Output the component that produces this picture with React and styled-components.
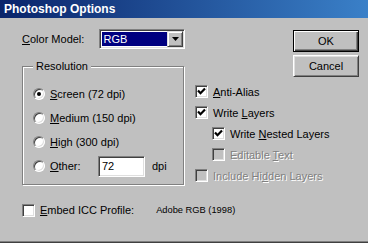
import React from 'react';
import styled, { createGlobalStyle } from 'styled-components';

const face = '#c0c0c0';

const GlobalStyle = createGlobalStyle`
  html, body {
    margin: 0;
    padding: 0;
    background: ${face};
  }
  * { box-sizing: border-box; }
`;

const Dialog = styled.div`
  width: 368px;
  height: 243px;
  background: ${face};
  font-family: "Liberation Sans", Arial, sans-serif;
  font-size: 11px;
  color: #000;
  display: flex;
  flex-direction: column;
  box-shadow: inset 0 -1px 0 #404040, inset 0 -2px 0 #808080;
`;

const TitleBar = styled.div`
  height: 18px;
  line-height: 18px;
  padding-left: 4px;
  color: #fff;
  font-weight: bold;
  font-size: 12px;
  background: linear-gradient(to right, #0a246a, #3a80c8);
`;

const Content = styled.div`
  display: flex;
  padding: 11px 0 0 22px;
`;

const LeftCol = styled.div`
  width: 163px;
  display: flex;
  flex-direction: column;
`;

const RightCol = styled.div`
  flex: 1;
  margin-left: 10px;
  display: flex;
  flex-direction: column;
`;

const FieldRow = styled.div`
  height: 20px;
  display: flex;
  align-items: center;
`;

const Label = styled.span`
  width: ${p => p.$w || 'auto'};
  color: ${p => (p.$disabled ? '#808080' : '#000')};
  text-shadow: ${p => (p.$disabled ? '1px 1px 0 #fff' : 'none')};
  white-space: nowrap;
`;

const Select = styled.div`
  width: 87px;
  height: 20px;
  display: flex;
  background: #fff;
  border: 1px solid;
  border-color: #808080 #fff #fff #808080;
  box-shadow: inset 1px 1px 0 #404040, inset -1px -1px 0 #dfdfdf;
  padding: 2px;
`;

const SelectValue = styled.div`
  flex: 1;
  background: #000080;
  color: #fff;
  line-height: 14px;
  padding-left: 2px;
`;

const DropButton = styled.div`
  width: 16px;
  background: ${face};
  border: 1px solid;
  border-color: #dfdfdf #404040 #404040 #dfdfdf;
  box-shadow: inset 1px 1px 0 #fff, inset -1px -1px 0 #808080;
  display: flex;
  align-items: center;
  justify-content: center;
  margin: -1px -1px -1px 0;
`;

const Group = styled.div`
  position: relative;
  margin-top: 17px;
  height: 119px;
  width: 162px;
  border: 1px solid #808080;
  box-shadow: inset 1px 1px 0 #fff, 1px 1px 0 #fff;
  padding: 15px 0 0 10px;
  display: flex;
  flex-direction: column;
`;

const Legend = styled.span`
  position: absolute;
  top: -7px;
  left: 10px;
  padding: 0 3px;
  line-height: 13px;
  background: ${face};
`;

const OptionRow = styled.div`
  height: ${p => p.$h || 24}px;
  display: flex;
  align-items: center;
  gap: 5px;
  padding-left: ${p => p.$indent || 0}px;
`;

const Radio = styled.span`
  width: 12px;
  height: 12px;
  border-radius: 50%;
  background: #fff;
  border: 1px solid;
  border-color: #808080 #fff #fff #808080;
  box-shadow: inset 1px 1px 0 #404040, inset -1px -1px 0 #dfdfdf;
  display: flex;
  align-items: center;
  justify-content: center;
  flex: none;

  &::after {
    content: '';
    width: 4px;
    height: 4px;
    border-radius: 50%;
    background: ${p => (p.$checked ? '#000' : 'transparent')};
  }
`;

const Box = styled.span`
  width: 13px;
  height: 13px;
  flex: none;
  background: ${p => (p.$disabled ? face : '#fff')};
  border: 1px solid;
  border-color: #808080 #fff #fff #808080;
  box-shadow: inset 1px 1px 0 #404040, inset -1px -1px 0 #dfdfdf;
  display: flex;
  align-items: center;
  justify-content: center;
`;

const TextInput = styled.div`
  width: 47px;
  height: 21px;
  margin-left: -5px;
  background: #fff;
  border: 1px solid;
  border-color: #808080 #fff #fff #808080;
  box-shadow: inset 1px 1px 0 #404040, inset -1px -1px 0 #dfdfdf;
  padding: 2px 0 0 3px;
  line-height: 14px;
`;

const ButtonStack = styled.div`
  align-self: flex-end;
  margin: 1px 9px 0 0;
  display: flex;
  flex-direction: column;
  gap: 3px;
`;

const Button = styled.div`
  width: 66px;
  height: 22px;
  display: flex;
  align-items: center;
  justify-content: center;
  background: ${face};
  border: 1px solid;
  border-color: ${p => (p.$default ? '#000' : '#fff #404040 #404040 #fff')};
  box-shadow: ${p =>
    p.$default
      ? 'inset 1px 1px 0 #fff, inset -1px -1px 0 #404040, inset -2px -2px 0 #808080'
      : 'inset 1px 1px 0 #dfdfdf, inset -1px -1px 0 #808080'};
  font-size: 11px;
`;

const CheckList = styled.div`
  margin-top: 4px;
  display: flex;
  flex-direction: column;
`;

const BottomRow = styled.div`
  margin: 14px 0 0 22px;
  height: 20px;
  display: flex;
  align-items: center;
  gap: 5px;
`;

const ProfileName = styled.span`
  margin-left: 17px;
  font-size: 9.3px;
`;

const Check = () => (
  <svg width="9" height="9" viewBox="0 0 9 9">
    <polyline points="1,3.5 3.5,6.2 8,1.5" fill="none" stroke="#000" strokeWidth="2.2" />
  </svg>
);

const Arrow = () => (
  <svg width="7" height="4" viewBox="0 0 7 4">
    <polygon points="0,0 7,0 3.5,4" fill="#000" />
  </svg>
);

const radios = [
  { key: 'S', rest: 'creen (72 dpi)', checked: true },
  { key: 'M', rest: 'edium (150 dpi)' },
  { key: 'H', rest: 'igh (300 dpi)' },
];

const checks = [
  { label: <><u>A</u>nti-Alias</>, checked: true },
  { label: <>Write <u>L</u>ayers</>, checked: true },
  { label: <>Write <u>N</u>ested Layers</>, checked: true, indent: 17 },
  { label: <>Editable <u>T</u>ext</>, disabled: true, indent: 17 },
  { label: <>Include Hi<u>d</u>den Layers</>, disabled: true },
];

export default function App() {
  return (
    <>
      <GlobalStyle />
      <Dialog>
        <TitleBar>Photoshop Options</TitleBar>
        <Content>
          <LeftCol>
            <FieldRow>
              <Label $w="77px"><u>C</u>olor Model:</Label>
              <Select>
                <SelectValue>RGB</SelectValue>
                <DropButton><Arrow /></DropButton>
              </Select>
            </FieldRow>
            <Group>
              <Legend>Resolution</Legend>
              {radios.map(r => (
                <OptionRow key={r.key}>
                  <Radio $checked={r.checked} />
                  <Label><u>{r.key}</u>{r.rest}</Label>
                </OptionRow>
              ))}
              <OptionRow>
                <Radio />
                <Label $w="48px"><u>O</u>ther:</Label>
                <TextInput>72</TextInput>
                <Label style={{ marginLeft: 2 }}>dpi</Label>
              </OptionRow>
            </Group>
          </LeftCol>
          <RightCol>
            <ButtonStack>
              <Button $default>OK</Button>
              <Button>Cancel</Button>
            </ButtonStack>
            <CheckList>
              {checks.map((c, i) => (
                <OptionRow key={i} $h={21} $indent={c.indent}>
                  <Box $disabled={c.disabled}>{c.checked && <Check />}</Box>
                  <Label $disabled={c.disabled}>{c.label}</Label>
                </OptionRow>
              ))}
            </CheckList>
          </RightCol>
        </Content>
        <BottomRow>
          <Box />
          <Label><u>E</u>mbed ICC Profile:</Label>
          <ProfileName>Adobe RGB (1998)</ProfileName>
        </BottomRow>
      </Dialog>
    </>
  );
}
